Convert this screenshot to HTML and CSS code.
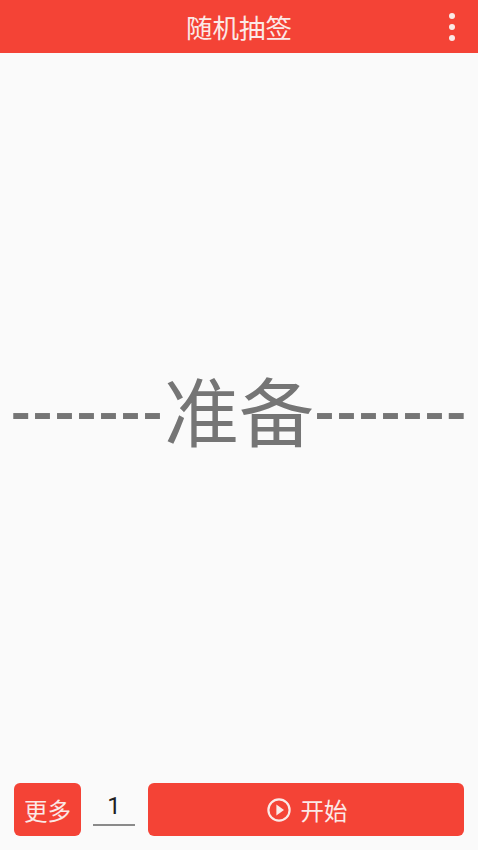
FILE: index.html
```html
<!DOCTYPE html>
<html>
<head lang="zh">
    <meta charset="UTF-8">
    <title>随机抽签</title>
    <link rel="stylesheet" href="styles.css">
</head>
<body>
<div class="app">
    <div class="topbar">
        <span class="title">随机抽签</span>
        <div class="menu"><i></i><i></i><i></i></div>
    </div>
    <div class="result">
        <div class="line"><span class="dash">-------</span>准备<span class="dash">-------</span></div>
    </div>
    <div class="bottom">
        <div class="btn more">更多</div>
        <div class="count">1</div>
        <div class="btn start">
            <svg class="play" width="24" height="24" viewBox="0 0 24 24">
                <circle cx="12" cy="12" r="10.6" fill="none" stroke="#fbe9e7" stroke-width="2.2"/>
                <path d="M9.4 6.6 L17 12 L9.4 17.4 Z" fill="#fbe9e7"/>
            </svg>
            <span>开始</span>
        </div>
    </div>
</div>
</body>
</html>
```

FILE: styles.css
```css
html, body{
    margin: 0;
    padding: 0;
}
body{
    background-color: #fafafa;
    font-family: Roboto, "Noto Sans CJK SC", sans-serif;
}
.app{
    width: 478px;
    height: 850px;
    display: flex;
    flex-direction: column;
}
.topbar{
    height: 53px;
    background-color: #f44336;
    display: flex;
    align-items: center;
    justify-content: center;
    position: relative;
    flex-shrink: 0;
}
.title{
    color: #fbe9e7;
    font-size: 26.5px;
}
.menu{
    position: absolute;
    right: 23px;
    top: 13px;
    display: flex;
    flex-direction: column;
    gap: 5px;
}
.menu i{
    width: 6px;
    height: 6px;
    border-radius: 50%;
    background-color: #fbe9e7;
}
.result{
    flex: 1;
    display: flex;
    align-items: center;
    justify-content: center;
    color: #757575;
    font-size: 75px;
    padding-bottom: 20px;
}
.line{
    white-space: nowrap;
}
.dash{
    font-size: 54px;
    font-weight: 700;
    letter-spacing: 0.7px;
    vertical-align: 9px;
}
.bottom{
    display: flex;
    align-items: stretch;
    height: 53px;
    padding: 0 14px 14px 14px;
    flex-shrink: 0;
}
.btn{
    background-color: #f44336;
    color: #fbe9e7;
    font-size: 23.5px;
    border-radius: 6px;
    display: flex;
    align-items: center;
    justify-content: center;
}
.more{
    width: 67px;
}
.count{
    width: 42px;
    margin: 0 13px 10px 12px;
    border-bottom: 2px solid #8a8a8a;
    color: #212121;
    font-size: 24px;
    text-align: center;
    line-height: 47px;
    height: 41px;
}
.start{
    flex: 1;
    gap: 10px;
    padding-left: 2px;
}
```
